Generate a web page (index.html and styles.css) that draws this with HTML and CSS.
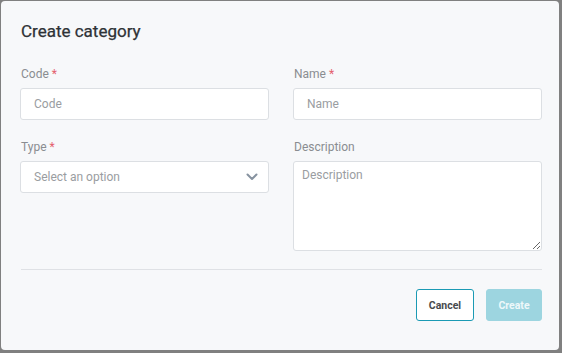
FILE: index.html
```html
<!DOCTYPE html>
<html lang="en">
<head>
  <meta charset="UTF-8">
  <title>Create category</title>
  <link rel="stylesheet" href="styles.css">
</head>
<body>

<div class="modal">
  <h2 class="modal-title">Create category</h2>

  <div class="form-grid">
    <div class="field">
      <label class="field-label">Code <span class="req">*</span></label>
      <input class="control" type="text" placeholder="Code">
    </div>
    <div class="field">
      <label class="field-label">Name <span class="req">*</span></label>
      <input class="control" type="text" placeholder="Name">
    </div>
    <div class="field">
      <label class="field-label">Type <span class="req">*</span></label>
      <div class="control select">
        <span class="select-placeholder">Select an option</span>
        <svg class="chevron" width="12" height="8" viewBox="0 0 12 8">
          <path d="M1.5 1.5 L6 6 L10.5 1.5" fill="none" stroke="#8793a0" stroke-width="2" stroke-linecap="round" stroke-linejoin="round"/>
        </svg>
      </div>
    </div>
    <div class="field">
      <label class="field-label">Description</label>
      <textarea class="control textarea" placeholder="Description"></textarea>
    </div>
  </div>

  <hr class="divider">

  <div class="actions">
    <button class="btn btn-outline">Cancel</button>
    <button class="btn btn-primary" disabled>Create</button>
  </div>
</div>

</body>
</html>
```

FILE: styles.css
```css
* { box-sizing: border-box; }
body {
  margin: 0;
  background: #808080;
  font-family: Roboto, "Noto Sans", sans-serif;
}
.modal {
  margin: 1px 0 0 1px;
  width: 558px;
  height: 349px;
  padding: 20px 17px 0 19px;
  background: #f7f8fa;
  border-radius: 4px;
}
.modal-title {
  margin: 0 0 25px 1px;
  font-size: 17px;
  line-height: 20px;
  font-weight: 400;
  color: #2e3236;
  -webkit-text-stroke: 0.25px #2e3236;
}
.form-grid {
  display: grid;
  grid-template-columns: 1fr 1fr;
  column-gap: 24px;
  row-gap: 19px;
  align-items: start;
}
.field {
  display: flex;
  flex-direction: column;
}
.field-label {
  margin: 0 0 6px 1px;
  font-size: 12px;
  line-height: 16px;
  color: #8a8d91;
}
.req { color: #e4606d; }
.control {
  width: 100%;
  height: 32px;
  padding: 0 13px;
  background: #fff;
  border: 1px solid #dcdfe3;
  border-radius: 3px;
  font-family: inherit;
  font-size: 12px;
  color: #333;
  outline: none;
}
.control::placeholder { color: #9a9da1; }
.select {
  display: flex;
  align-items: center;
  justify-content: space-between;
  padding-right: 10px;
}
.select-placeholder { color: #9a9da1; }
.textarea {
  height: 90px;
  padding: 6px 8px;
  resize: vertical;
  display: block;
}
.divider {
  margin: 18px 0 19px 1px;
  border: none;
  border-top: 1px solid #dfe1e5;
}
.actions {
  display: flex;
  justify-content: flex-end;
  gap: 12px;
}
.btn {
  height: 32px;
  padding: 0;
  border-radius: 3px;
  font-family: inherit;
  font-size: 10.5px;
  font-weight: 700;
}
.btn-outline {
  width: 58px;
  background: #fff;
  border: 1px solid #1b9ab4;
  color: #474a4e;
}
.btn-primary {
  width: 56px;
  background: #9dd5e0;
  border: 1px solid #9dd5e0;
  color: #eef8fa;
}
```
